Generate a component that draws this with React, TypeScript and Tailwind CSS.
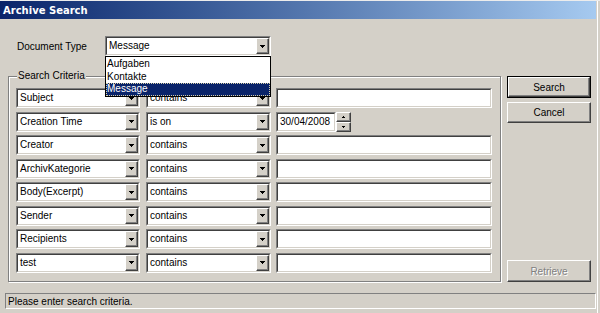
import React from "react";

const Arrow = ({ small = false }: { small?: boolean }) =>
  small ? (
    <svg width="3" height="2" viewBox="0 0 3 2" shapeRendering="crispEdges">
      <rect x="0" y="0" width="3" height="1" fill="#000" />
      <rect x="1" y="1" width="1" height="1" fill="#000" />
    </svg>
  ) : (
    <svg width="5" height="3" viewBox="0 0 5 3" shapeRendering="crispEdges">
      <rect x="0" y="0" width="5" height="1" fill="#000" />
      <rect x="1" y="1" width="3" height="1" fill="#000" />
      <rect x="2" y="2" width="1" height="1" fill="#000" />
    </svg>
  );

const ArrowUp = () => (
  <svg width="3" height="2" viewBox="0 0 3 2" shapeRendering="crispEdges">
    <rect x="1" y="0" width="1" height="1" fill="#000" />
    <rect x="0" y="1" width="3" height="1" fill="#000" />
  </svg>
);

const DropBtn = () => (
  <div className="flex w-[13px] shrink-0 items-center justify-center border border-t-white border-l-white border-b-[#404040] border-r-[#404040] bg-[#d4d0c8] shadow-[inset_-1px_-1px_0_#808080]">
    <Arrow />
  </div>
);

const Sunken = ({ className, children }: { className: string; children?: React.ReactNode }) => (
  <div className={`flex h-[20px] border border-t-[#808080] border-l-[#808080] border-b-white border-r-white ${className}`}>
    <div className="flex min-w-0 flex-1 border border-t-[#404040] border-l-[#404040] border-b-[#d4d0c8] border-r-[#d4d0c8] bg-white">
      {children}
    </div>
  </div>
);

const Combo = ({ value, className }: { value: string; className: string }) => (
  <Sunken className={className}>
    <span className="flex flex-1 items-center truncate pl-[2px] leading-[16px]">{value}</span>
    <DropBtn />
  </Sunken>
);

const rows: [string, string][] = [
  ["Subject", "contains"],
  ["Creation Time", "is on"],
  ["Creator", "contains"],
  ["ArchivKategorie", "contains"],
  ["Body(Excerpt)", "contains"],
  ["Sender", "contains"],
  ["Recipients", "contains"],
  ["test", "contains"],
];

const SpinBtn = ({ up }: { up: boolean }) => (
  <div className="flex h-[10px] w-[15px] items-center justify-center border border-t-white border-l-white border-b-[#404040] border-r-[#404040] bg-[#d4d0c8] shadow-[inset_-1px_-1px_0_#808080]">
    {up ? <ArrowUp /> : <Arrow small />}
  </div>
);

export default function App() {
  return (
    <div className="flex h-[313px] w-[600px] overflow-hidden border-t border-t-[#ececec] bg-[#d4d0c8] font-['Liberation_Sans',Arial,sans-serif] text-[10px] text-black">
      <div className="flex w-[597px] flex-col">
        {/* Title bar */}
        <div className="flex h-[18px] w-[596px] items-center bg-gradient-to-r from-[#0a246a] to-[#a6caf0] pl-[3px] font-['DejaVu_Sans',sans-serif] text-[10px] font-bold text-white">
          Archive Search
        </div>

        {/* Document Type */}
        <div className="mt-[17px] flex items-center">
          <div className="ml-[17px] w-[88px]">Document Type</div>
          <div className="relative z-10">
            <Combo value="Message" className="w-[166px]" />
            <div className="absolute left-0 top-[20px] flex w-[166px] flex-col border border-black bg-white">
              <div className="h-[13px] pl-[1px] leading-[13px]">Aufgaben</div>
              <div className="h-[13px] pl-[1px] leading-[13px]">Kontakte</div>
              <div className="h-[13px] bg-[#0a246a] pl-[1px] leading-[12px] text-white outline-1 -outline-offset-1 outline-dotted outline-[#d8d0a8]">
                Message
              </div>
            </div>
          </div>
        </div>

        {/* Main area */}
        <div className="ml-[8px] mt-[20px] flex h-[206px] gap-[6px]">
          <div className="relative w-[493px] border border-[#808080] pl-[7px] pt-[11px] shadow-[inset_1px_1px_0_#fff,1px_1px_0_#fff]">
            <div className="absolute left-[8px] top-[-7px] bg-[#d4d0c8] px-[1px] leading-[12px]">Search Criteria</div>
            <div className="flex flex-col gap-[3.5px]">
              {rows.map(([field, op], i) => (
                <div key={i} className="flex">
                  <Combo value={field} className="w-[124px]" />
                  <Combo value={op} className="ml-[6px] w-[125px]" />
                  {field === "Creation Time" ? (
                    <div className="ml-[5px] flex">
                      <Sunken className="w-[60px]">
                        <span className="flex items-center pl-[2px] leading-[16px]">30/04/2008</span>
                      </Sunken>
                      <div className="flex flex-col">
                        <SpinBtn up />
                        <SpinBtn up={false} />
                      </div>
                    </div>
                  ) : (
                    <Sunken className="ml-[5px] w-[216px]" />
                  )}
                </div>
              ))}
            </div>
          </div>

          <div className="flex w-[84px] flex-col justify-between">
            <div className="flex flex-col">
              <div className="h-[22px] border border-black">
                <div className="flex h-full items-center justify-center border border-t-white border-l-white border-b-[#404040] border-r-[#404040] shadow-[inset_-1px_-1px_0_#808080]">
                  Search
                </div>
              </div>
              <div className="mt-[4px] flex h-[21px] items-center justify-center border border-t-white border-l-white border-b-[#404040] border-r-[#404040] shadow-[inset_-1px_-1px_0_#808080]">
                Cancel
              </div>
            </div>
            <div className="flex h-[22px] items-center justify-center border border-t-white border-l-white border-b-[#404040] border-r-[#404040] text-[#808080] shadow-[inset_-1px_-1px_0_#808080] [text-shadow:1px_1px_0_#fff]">
              Retrieve
            </div>
          </div>
        </div>

        {/* Status bar */}
        <div className="ml-[5px] mt-[11px] flex h-[16px] w-[591px] items-center border border-t-[#808080] border-l-[#808080] border-b-white border-r-white pl-[2px]">
          Please enter search criteria.
        </div>
      </div>
      <div className="w-[1px] bg-white" />
    </div>
  );
}
